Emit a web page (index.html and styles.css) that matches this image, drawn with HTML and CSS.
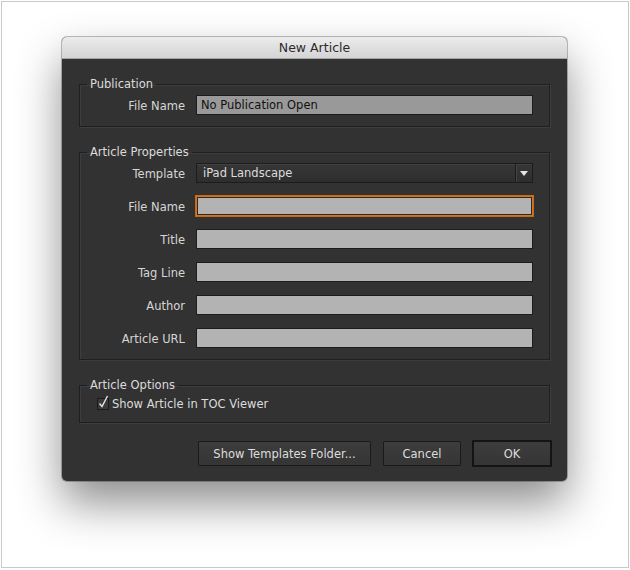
FILE: index.html
```html
<!DOCTYPE html>
<html lang="en">
<head>
  <meta charset="UTF-8">
  <meta name="viewport" content="width=device-width, initial-scale=1.0">
  <title>New Article</title>
  <link rel="stylesheet" href="styles.css">
</head>
<body>
  <div class="screen">
    <div class="dialog">
      <div class="titlebar">New Article</div>

      <div class="dialog-body">
        <!-- Publication -->
        <fieldset class="group">
          <legend>Publication</legend>
          <div class="row">
            <label>File Name</label>
            <input type="text" class="field field-disabled" value="No Publication Open" readonly>
          </div>
        </fieldset>

        <!-- Article Properties -->
        <fieldset class="group group-props">
          <legend>Article Properties</legend>
          <div class="row">
            <label>Template</label>
            <div class="dropdown">
              <span class="dropdown-text">iPad Landscape</span>
              <span class="dropdown-arrow"></span>
            </div>
          </div>
          <div class="row">
            <label>File Name</label>
            <input type="text" class="field field-focus">
          </div>
          <div class="row">
            <label>Title</label>
            <input type="text" class="field">
          </div>
          <div class="row">
            <label>Tag Line</label>
            <input type="text" class="field">
          </div>
          <div class="row">
            <label>Author</label>
            <input type="text" class="field">
          </div>
          <div class="row">
            <label>Article URL</label>
            <input type="text" class="field">
          </div>
        </fieldset>

        <!-- Article Options -->
        <fieldset class="group group-options">
          <legend>Article Options</legend>
          <div class="check-row">
            <svg class="checkbox" width="14" height="16" viewBox="0 0 14 16">
              <rect x="1.5" y="4.5" width="11" height="11" fill="#3a3a3a" stroke="#1a1a1a"/>
              <path d="M3.5 9.5 L6 12.5 L11.5 2" fill="none" stroke="#e6e6e6" stroke-width="1.4"/>
            </svg>
            <span>Show Article in TOC Viewer</span>
          </div>
        </fieldset>

        <div class="buttons">
          <button class="btn btn-templates">Show Templates Folder...</button>
          <button class="btn btn-cancel">Cancel</button>
          <button class="btn btn-ok">OK</button>
        </div>
      </div>
    </div>
  </div>
</body>
</html>
```

FILE: styles.css
```css
body {
  margin: 0;
  padding: 0;
  font-family: "DejaVu Sans", "Open Sans", sans-serif;
  font-size: 11.5px;
  background-color: #ffffff;
}
.screen {
  margin: 1px;
  width: 566px;
  height: 530px;
  padding: 35px 0 0 60px;
  border: 1px solid #c9c9c9;
  background-color: #ffffff;
}
.dialog {
  width: 505px;
  background-color: #323232;
  border-radius: 5px;
  box-shadow: 0 22px 45px rgba(0, 0, 0, 0.45), 0 0 0 1px rgba(0, 0, 0, 0.25);
  overflow: hidden;
}
.titlebar {
  height: 21px;
  line-height: 22px;
  text-align: center;
  font-size: 12.5px;
  color: #2b2b2b;
  background: linear-gradient(#ececec, #d4d4d4);
  border-bottom: 1px solid #a6a6a6;
}
.dialog-body {
  padding: 18px 17px 14px 17px;
}
.group {
  margin: 0 0 18px 0;
  padding: 4px 16px 11px 0;
  min-width: 0;
  border: 1px solid #1f1f1f;
  box-shadow: 1px 1px 0 #3d3d3d, inset 1px 1px 0 #3d3d3d;
  display: flex;
  flex-direction: column;
  gap: 13px;
}
.group legend {
  margin-left: 7px;
  padding: 0 3px;
  line-height: 14px;
  color: #dcdcdc;
}
.group-props {
  padding-bottom: 11px;
  margin-bottom: 18px;
}
.group-options {
  padding: 2px 16px 11px 0;
  margin-bottom: 17px;
}
.row {
  display: grid;
  grid-template-columns: 105px 337px;
  column-gap: 11px;
  align-items: center;
}
.row label {
  text-align: right;
  color: #d6d6d6;
  padding-top: 1px;
}
.field {
  box-sizing: border-box;
  height: 20px;
  width: 337px;
  margin: 0;
  padding: 0 4px;
  font-family: inherit;
  font-size: 11.5px;
  color: #111111;
  background-color: #b3b3b3;
  border: 1px solid #1c1c1c;
  outline: none;
}
.field-disabled {
  background-color: #999999;
}
.field-focus {
  border-color: #d9731a;
  box-shadow: 0 0 0 1px #c8691a, inset 0 0 0 1px #2a2a2a;
}
.dropdown {
  box-sizing: border-box;
  height: 20px;
  display: flex;
  align-items: center;
  background: linear-gradient(#363636, #2e2e2e);
  border: 1px solid #1c1c1c;
  box-shadow: inset 0 1px 0 #424242;
}
.dropdown-text {
  flex: 1;
  padding-left: 6px;
  color: #dcdcdc;
}
.dropdown-arrow {
  width: 16px;
  height: 18px;
  border-left: 1px solid #1c1c1c;
  box-shadow: inset 1px 0 0 #444444;
  position: relative;
}
.dropdown-arrow::after {
  content: "";
  position: absolute;
  left: 4px;
  top: 7px;
  border-left: 4px solid transparent;
  border-right: 4px solid transparent;
  border-top: 5px solid #e6e6e6;
}
.check-row {
  display: flex;
  align-items: flex-end;
  gap: 2px;
  padding-left: 16px;
  color: #dcdcdc;
}
.checkbox {
  display: block;
  margin-bottom: 1px;
}
.buttons {
  display: flex;
  justify-content: flex-end;
  align-items: center;
  gap: 12px;
  margin-right: -2px;
}
.btn {
  box-sizing: border-box;
  height: 25px;
  margin: 0;
  padding: 0;
  font-family: inherit;
  font-size: 11.5px;
  color: #dddddd;
  background: linear-gradient(#3d3d3d, #353535);
  border: 1px solid #1a1a1a;
  border-radius: 1px;
}
.btn-templates {
  width: 173px;
}
.btn-cancel {
  width: 78px;
}
.btn-ok {
  width: 80px;
  height: 27px;
  border: 2px solid #141414;
  margin-left: -1px;
}
```
